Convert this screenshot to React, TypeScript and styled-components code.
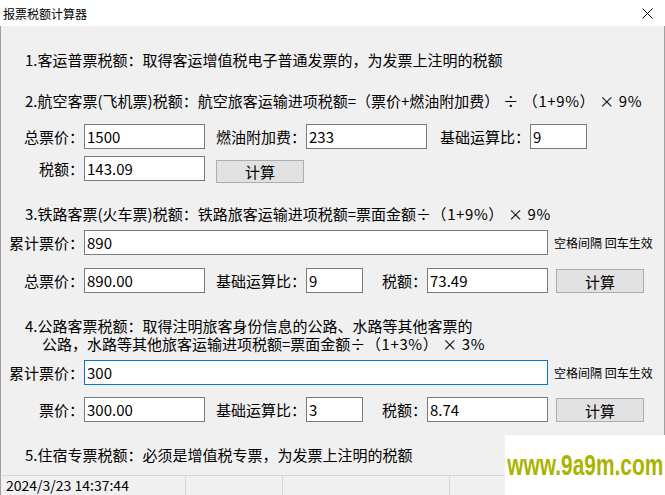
import React from 'react';
import styled, { createGlobalStyle } from "styled-components";

const GlobalStyle = createGlobalStyle`
  html, body {
    margin: 0;
    padding: 0;
    background: #f0f0f0;
  }
`;

const Window = styled.div`
  position: relative;
  width: 665px;
  height: 495px;
  display: flex;
  flex-direction: column;
  overflow: hidden;
  background: #f0f0f0;
  color: #000;
  font-family: "Noto Sans CJK SC", "Noto Sans", sans-serif;
`;

const TitleBar = styled.div`
  height: 26px;
  flex-shrink: 0;
  display: flex;
  align-items: center;
  justify-content: space-between;
  padding: 0 12px 0 3px;
  background: #fff;
  font-size: 12px;
`;

const Body = styled.div`
  flex: 1;
  display: flex;
  flex-direction: column;
  border-left: 1px solid #a0a0a0;
  border-right: 1px solid #a0a0a0;
`;

const Line = styled.p<{ $top: number }>`
  margin: ${(p) => p.$top}px 0 0;
  padding-left: 24px;
  font-size: 15px;
  line-height: 18px;
  white-space: nowrap;
`;

const Indent = styled.span`
  padding-left: 17px;
`;

const Formula = styled.span`
  letter-spacing: 0.6px;
`;

const Row = styled.div<{ $top: number }>`
  display: flex;
  align-items: flex-start;
  height: 25px;
  margin-top: ${(p) => p.$top}px;
  padding-left: 7px;
`;

const Label = styled.span<{ $w: number }>`
  width: ${(p) => p.$w}px;
  flex-shrink: 0;
  text-align: right;
  font-size: 15px;
  line-height: 25px;
  white-space: nowrap;
`;

const Field = styled.input<{ $w: number; $focused?: boolean }>`
  width: ${(p) => p.$w}px;
  height: 25px;
  flex-shrink: 0;
  box-sizing: border-box;
  margin: 0;
  padding: 0 2px;
  border: 1px solid ${(p) => (p.$focused ? "#0078d7" : "#7a7a7a")};
  background: #fff;
  color: #000;
  font-family: inherit;
  font-size: 15px;
  outline: none;
`;

const CalcButton = styled.button<{ $ml: number; $mt: number; $h: number }>`
  width: 88px;
  height: ${(p) => p.$h}px;
  margin: ${(p) => p.$mt}px 0 0 ${(p) => p.$ml}px;
  padding: 0;
  flex-shrink: 0;
  box-sizing: border-box;
  border: 1px solid #adadad;
  background: #e1e1e1;
  color: #000;
  font-family: inherit;
  font-size: 15px;
`;

const Hint = styled.span`
  margin-left: 6px;
  font-size: 12px;
  line-height: 25px;
  white-space: nowrap;
`;

const StatusBar = styled.div`
  height: 20px;
  flex-shrink: 0;
  box-sizing: border-box;
  display: flex;
  border-top: 1px solid #d7d7d7;
  border-left: 1px solid #a0a0a0;
`;

const StatusPanel = styled.div<{ $w: number }>`
  width: ${(p) => p.$w}px;
  flex-shrink: 0;
  box-sizing: border-box;
  padding-left: 5px;
  border-right: 1px solid #d7d7d7;
  font-size: 14px;
  line-height: 19px;
  white-space: nowrap;
`;

const Watermark = styled.div`
  position: absolute;
  left: 505px;
  top: 435px;
  width: 160px;
  height: 60px;
  display: flex;
  align-items: center;
  justify-content: center;
  overflow: hidden;
  background: #fff;
`;

const WatermarkText = styled.span`
  font-family: "Liberation Sans", Arial, sans-serif;
  font-weight: bold;
  font-size: 29px;
  color: #a9b400;
  transform: scaleX(0.72);
  white-space: nowrap;
`;

const CloseIcon = () => (
  <svg width="11" height="11" viewBox="0 0 11 11">
    <path d="M0.5 0.5 L10.5 10.5 M10.5 0.5 L0.5 10.5" stroke="#000" strokeWidth="1" fill="none" />
  </svg>
);

const App: React.FC = () => {
  return (
    <Window>
      <GlobalStyle />
      <TitleBar>
        <span>报票税额计算器</span>
        <CloseIcon />
      </TitleBar>
      <Body>
        <Line $top={25}>1.客运普票税额：取得客运增值税电子普通发票的，为发票上注明的税额</Line>

        <Line $top={23}>
          2.航空客票(飞机票)税额：航空旅客运输进项税额=（票价+燃油附加费）<Formula> ÷ （1+9%） × 9%</Formula>
        </Line>
        <Row $top={14}>
          <Label $w={76}>总票价：</Label>
          <Field $w={121} defaultValue="1500" />
          <Label $w={101}>燃油附加费：</Label>
          <Field $w={121} defaultValue="233" />
          <Label $w={103}>基础运算比：</Label>
          <Field $w={57} defaultValue="9" />
        </Row>
        <Row $top={7}>
          <Label $w={76}>税额：</Label>
          <Field $w={121} defaultValue="143.09" />
          <CalcButton $ml={11} $mt={4} $h={23}>计算</CalcButton>
        </Row>

        <Line $top={24}>
          3.铁路客票(火车票)税额：铁路旅客运输进项税额=票面金额<Formula>÷（1+9%） × 9%</Formula>
        </Line>
        <Row $top={7}>
          <Label $w={76}>累计票价：</Label>
          <Field $w={464} defaultValue="890" />
          <Hint>空格间隔 回车生效</Hint>
        </Row>
        <Row $top={13}>
          <Label $w={76}>总票价：</Label>
          <Field $w={121} defaultValue="890.00" />
          <Label $w={101}>基础运算比：</Label>
          <Field $w={57} defaultValue="9" />
          <Label $w={64}>税额：</Label>
          <Field $w={121} defaultValue="73.49" />
          <CalcButton $ml={8} $mt={1} $h={24}>计算</CalcButton>
        </Row>

        <Line $top={24}>
          4.公路客票税额：取得注明旅客身份信息的公路、水路等其他客票的
          <br />
          <Indent>公路，水路等其他旅客运输进项税额=票面金额<Formula>÷（1+3%） × 3%</Formula></Indent>
        </Line>
        <Row $top={7}>
          <Label $w={76}>累计票价：</Label>
          <Field $w={464} $focused defaultValue="300" />
          <Hint>空格间隔 回车生效</Hint>
        </Row>
        <Row $top={12}>
          <Label $w={76}>票价：</Label>
          <Field $w={121} defaultValue="300.00" />
          <Label $w={101}>基础运算比：</Label>
          <Field $w={57} defaultValue="3" />
          <Label $w={64}>税额：</Label>
          <Field $w={121} defaultValue="8.74" />
          <CalcButton $ml={8} $mt={1} $h={24}>计算</CalcButton>
        </Row>

        <Line $top={24}>5.住宿专票税额：必须是增值税专票，为发票上注明的税额</Line>
      </Body>
      <StatusBar>
        <StatusPanel $w={185}>2024/3/23 14:37:44</StatusPanel>
        <StatusPanel $w={97} />
        <StatusPanel $w={167} />
      </StatusBar>
      <Watermark>
        <WatermarkText>www.9a9m.com</WatermarkText>
      </Watermark>
    </Window>
  );
};

export default App;
